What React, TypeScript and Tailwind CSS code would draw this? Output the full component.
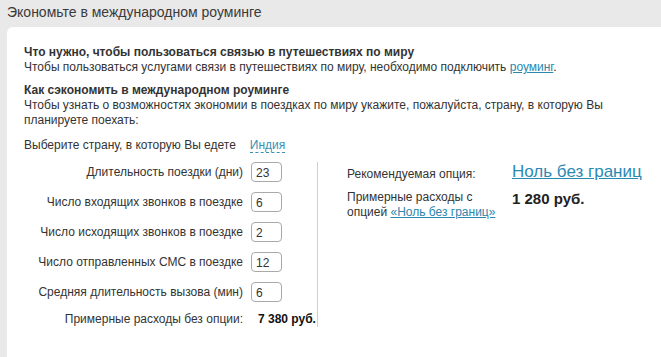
const rows = [
  { label: "Длительность поездки (дни)", value: "23" },
  { label: "Число входящих звонков в поездке", value: "6" },
  { label: "Число исходящих звонков в поездке", value: "2" },
  { label: "Число отправленных СМС в поездке", value: "12" },
  { label: "Средняя длительность вызова (мин)", value: "6" },
];

export default function App() {
  return (
    <div className="flex h-[357px] w-[661px] flex-col overflow-hidden bg-[#e9e9e9] font-['Liberation_Sans',Arial,sans-serif] text-[#333]">
      {/* Title */}
      <div className="h-[27px] shrink-0 pl-[7px] pt-[4px] text-[14px] leading-[17px] text-[#3a3a3a]">
        Экономьте в международном роуминге
      </div>

      {/* Panel */}
      <div className="ml-[7px] min-h-[340px] shrink-0 rounded-tl-[6px] bg-white pl-[17px] pt-[18px] text-[12px] leading-[15px]">
        <div className="font-bold">Что нужно, чтобы пользоваться связью в путешествиях по миру</div>
        <div>
          Чтобы пользоваться услугами связи в путешествиях по миру, необходимо подключить{" "}
          <a href="#" className="text-[#2b87ad] underline">роуминг</a>.
        </div>

        <div className="mt-[8px] font-bold">Как сэкономить в международном роуминге</div>
        <div className="w-[600px]">
          Чтобы узнать о возможностях экономии в поездках по миру укажите, пожалуйста, страну, в которую Вы
          планируете поехать:
        </div>

        <div className="mt-[10px] flex">
          <span>Выберите страну, в которую Вы едете</span>
          <a href="#" className="ml-[14px] border-b border-dashed border-[#3a8fb7] text-[#3a8fb7] leading-[14px]">
            Индия
          </a>
        </div>

        <div className="mt-[9px] flex">
          {/* Parameters */}
          <div className="flex h-[165px] w-[294px] flex-col gap-[10px] border-r border-[#cfcfcf]">
            {rows.map((r) => (
              <div key={r.label} className="flex h-[20px] items-center">
                <span className="w-[219px] text-right">{r.label}</span>
                <div className="ml-[8px] flex h-[20px] w-[31px] items-center rounded-[4px] border border-[#a9a9a9] pl-[4px] pt-[2px]">
                  {r.value}
                </div>
              </div>
            ))}
            <div className="flex h-[20px] items-center">
              <span className="w-[219px] text-right">Примерные расходы без опции:</span>
              <span className="ml-[15px] font-bold text-[#111]">7 380 руб.</span>
            </div>
          </div>

          {/* Result */}
          <div className="pl-[29px]">
            <div className="flex items-center">
              <span className="mt-[5px] w-[165px]">Рекомендуемая опция:</span>
              <a href="#" className="text-[17px] leading-[20px] text-[#2b8ab3] underline">Ноль без границ</a>
            </div>
            <div className="mt-[8px] flex">
              <div className="w-[165px]">
                Примерные расходы с
                <br />
                опцией{" "}
                <a href="#" className="text-[#2b87ad] underline">«Ноль без границ»</a>
              </div>
              <span className="text-[15px] font-bold leading-[18px] text-[#222]">1 280 руб.</span>
            </div>
          </div>
        </div>
      </div>
    </div>
  );
}
